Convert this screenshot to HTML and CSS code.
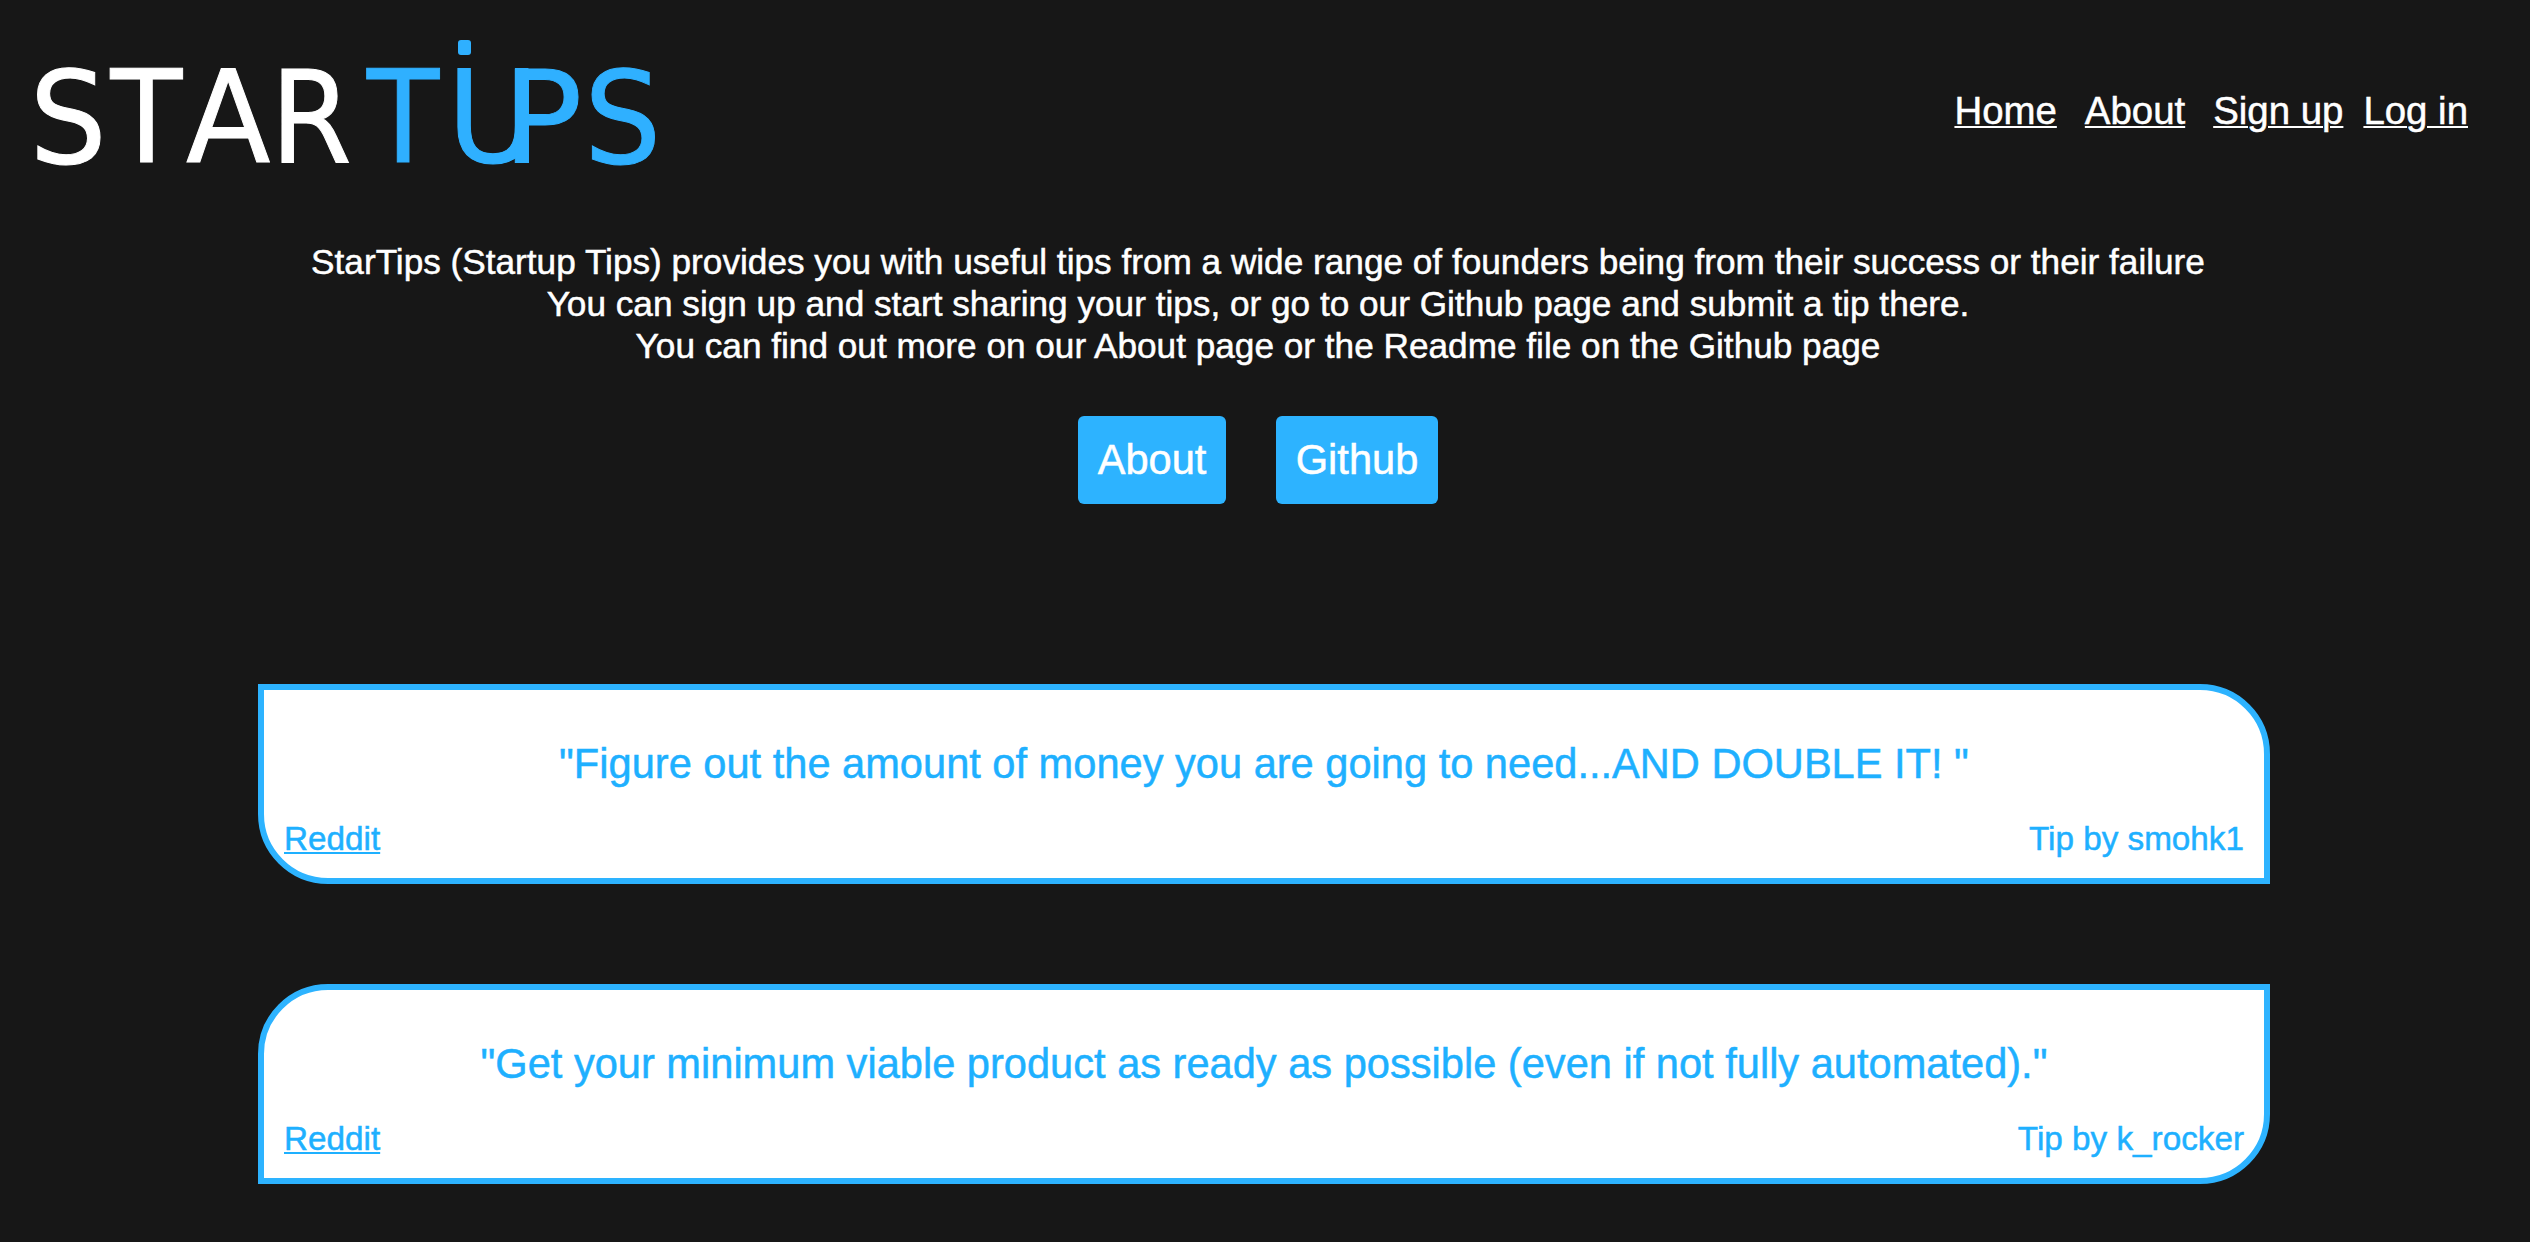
FILE: index.html
```html
<!DOCTYPE html>
<html lang="en">
    <head>
        <meta charset="UTF-8" />
        <meta name="viewport" content="width=device-width, initial-scale=1.0" />
        <title>StarTips</title>
        <link rel="stylesheet" href="styles.css">
    </head>
    <body>
        <!-- Header -->
        <header class="header">
            <a href="#" class="logo">
                <svg width="670" height="190" viewBox="0 0 670 190" role="img" aria-label="StarTips">
                    <g class="logo-star">
                        <text x="29.5" y="162.5" textLength="77.3" lengthAdjust="spacingAndGlyphs">S</text>
                        <text x="110.4" y="162" textLength="71.8" lengthAdjust="spacingAndGlyphs">T</text>
                        <text x="186" y="162" textLength="84.5" lengthAdjust="spacingAndGlyphs">A</text>
                        <text x="270.5" y="163" textLength="81.3" lengthAdjust="spacingAndGlyphs">R</text>
                    </g>
                    <g class="logo-tips">
                        <text x="367" y="162" textLength="72.3" lengthAdjust="spacingAndGlyphs">T</text>
                        <!-- dot over the U makes it an i -->
                        <rect x="458" y="40" width="13" height="15" rx="3" />
                        <text x="447.1" y="162" textLength="91.8" lengthAdjust="spacingAndGlyphs">U</text>
                        <text x="502.3" y="163" textLength="80.3" lengthAdjust="spacingAndGlyphs">P</text>
                        <text x="584" y="162.5" textLength="77.3" lengthAdjust="spacingAndGlyphs">S</text>
                    </g>
                </svg>
            </a>
            <nav class="nav">
                <a href="#">Home</a>
                <a href="#">About</a>
                <a href="#" class="signup">Sign up</a>
                <a href="#">Log in</a>
            </nav>
        </header>

        <!-- Intro -->
        <section class="intro">
            <p>
                StarTips (Startup Tips) provides you with useful tips from a wide range of founders being from their success or their failure<br>
                You can sign up and start sharing your tips, or go to our Github page and submit a tip there.<br>
                You can find out more on our About page or the Readme file on the Github page
            </p>
            <div class="buttons">
                <a href="#" class="btn">About</a>
                <a href="#" class="btn">Github</a>
            </div>
        </section>

        <!-- Tips -->
        <main class="tips">
            <article class="tip">
                <p class="tip-text">"Figure out the amount of money you are going to need...AND DOUBLE IT! "</p>
                <div class="tip-info">
                    <a href="#">Reddit</a>
                    <span>Tip by smohk1</span>
                </div>
            </article>
            <article class="tip">
                <p class="tip-text">"Get your minimum viable product as ready as possible (even if not fully automated)."</p>
                <div class="tip-info">
                    <a href="#">Reddit</a>
                    <span>Tip by k_rocker</span>
                </div>
            </article>
        </main>
    </body>
</html>
```
FILE: styles.css
```css
:root {
    --blue: #2db3ff;
    --text-blue: #1eb0ff;
    --dark: #171717;
}

* {
    box-sizing: border-box;
}

body {
    margin: 0;
    background-color: var(--dark);
    color: #fff;
    font-family: "Liberation Sans", Arial, sans-serif;
    -webkit-text-stroke: 0.5px;
}

p {
    margin: 0;
}

a {
    text-decoration-thickness: 2px;
    text-underline-offset: 2px;
}

/* Header */
.header {
    display: flex;
    justify-content: space-between;
    height: 241px;
    padding-right: 62px;
}

.logo svg {
    display: block;
    overflow: visible;
}

.logo text {
    font-family: "DejaVu Sans", sans-serif;
    font-size: 129px;
    -webkit-text-stroke: 0;
    stroke-width: 1px;
}

.logo-star {
    fill: #fff;
    stroke: #fff;
}

.logo-tips {
    fill: #2fb0ff;
    stroke: #2fb0ff;
}

.logo rect {
    stroke: none;
}

.nav {
    display: flex;
    gap: 28px;
    padding-top: 89px;
    font-size: 38.4px;
    line-height: 44px;
}

.nav a {
    color: #fff;
}

.nav .signup {
    margin-right: -8px;
}

/* Intro */
.intro {
    width: 2516px;
    font-size: 35.2px;
    line-height: 42px;
    text-align: center;
}

.buttons {
    display: flex;
    justify-content: center;
    gap: 50px;
    margin-top: 49px;
}

.btn {
    padding: 20px 19.7px;
    border-radius: 6px;
    background-color: var(--blue);
    color: #fff;
    font-size: 41.6px;
    line-height: 48px;
    text-decoration: none;
}

/* Tips */
.tips {
    width: 2012px;
    margin: 180px 0 0 258px;
}

.tip {
    margin-bottom: 100px;
    padding: 50px 20px 20px;
    border: 6px solid var(--blue);
    border-radius: 0 70px;
    background-color: #fff;
    color: var(--text-blue);
}

.tip:nth-child(even) {
    margin-bottom: 0;
    border-radius: 70px 0;
}

.tip-text {
    font-size: 41.6px;
    line-height: 48px;
    text-align: center;
}

.tip-info {
    display: flex;
    justify-content: space-between;
    margin-top: 32px;
    font-size: 33.28px;
    line-height: 38px;
}

.tip-info a {
    color: var(--text-blue);
}
```
